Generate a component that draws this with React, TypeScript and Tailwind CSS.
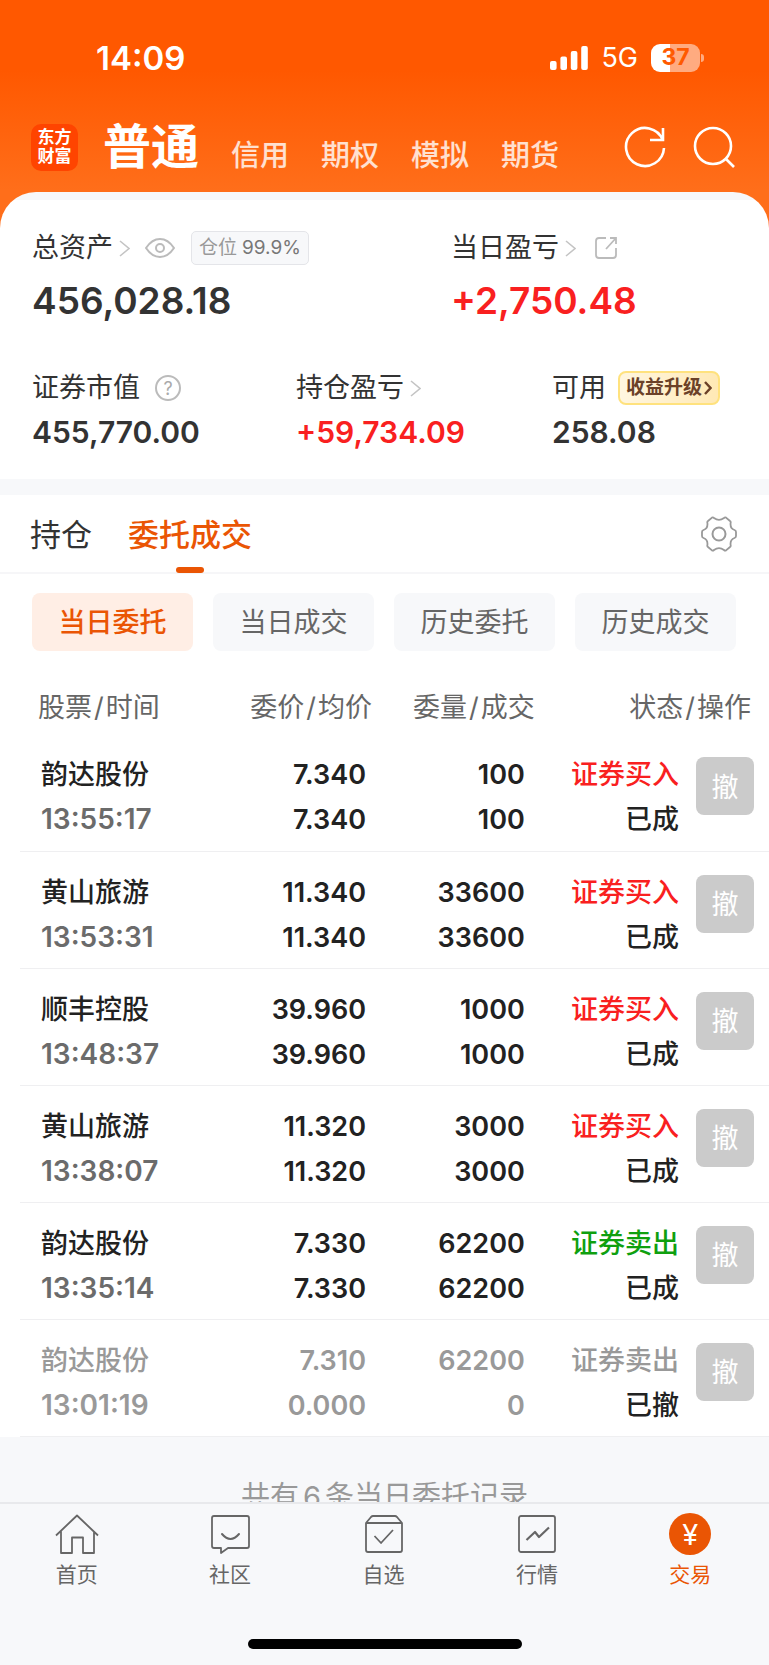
import type { ReactNode } from 'react';
import clsx from 'clsx';

type Order = {
  name: string;
  time: string;
  price: string;
  average: string;
  amount: string;
  filled: string;
  side: string;
  status: string;
};

const orders: Order[] = [
  { name: '韵达股份', time: '13:55:17', price: '7.340', average: '7.340', amount: '100', filled: '100', side: '证券买入', status: '已成' },
  { name: '黄山旅游', time: '13:53:31', price: '11.340', average: '11.340', amount: '33600', filled: '33600', side: '证券买入', status: '已成' },
  { name: '顺丰控股', time: '13:48:37', price: '39.960', average: '39.960', amount: '1000', filled: '1000', side: '证券买入', status: '已成' },
  { name: '黄山旅游', time: '13:38:07', price: '11.320', average: '11.320', amount: '3000', filled: '3000', side: '证券买入', status: '已成' },
  { name: '韵达股份', time: '13:35:14', price: '7.330', average: '7.330', amount: '62200', filled: '62200', side: '证券卖出', status: '已成' },
  { name: '韵达股份', time: '13:01:19', price: '7.310', average: '0.000', amount: '62200', filled: '0', side: '证券卖出', status: '已撤' },
];

const markets = ['信用', '期权', '模拟', '期货'];
const filters = ['当日委托', '当日成交', '历史委托', '历史成交'];

const Chevron = () => (
  <svg width="11" height="17" viewBox="0 0 11 17" fill="none" stroke="#c4c4c4" strokeWidth="1.6">
    <path d="M1 1L10 8.5L1 16" />
  </svg>
);

const StatusBar = () => (
  <div className="flex h-[76px] items-center justify-between pt-[39px] pr-[65px] pl-24 text-white">
    <span className="text-[33px] leading-9 font-semibold">14:09</span>
    <div className="flex items-center gap-[13px]">
      <svg width="38" height="24" viewBox="0 0 38 24" fill="#fff">
        <rect x="0" y="15" width="6.6" height="9" rx="2" />
        <rect x="10.4" y="10.5" width="6.6" height="13.5" rx="2" />
        <rect x="20.8" y="5" width="6.6" height="19" rx="2" />
        <rect x="31.2" y="0" width="6.6" height="24" rx="2" />
      </svg>
      <span className="text-[27px] leading-9">5G</span>
      <div className="flex items-center gap-px">
        <span className="flex h-7 w-[49px] items-center justify-center rounded-[9px] bg-[linear-gradient(to_right,#fff_38%,#ffab80_38%)] text-[23px] font-bold text-[#ff5a00]">
          37
        </span>
        <span className="h-2 w-[3px] rounded-r-full bg-[#ffab80]" />
      </div>
    </div>
  </div>
);

const Header = () => (
  <header className="shrink-0 bg-[linear-gradient(to_bottom,#ff5800_70px,#ff6e1a_190px)]">
    <StatusBar />
    <div className="flex h-[116px] items-center pt-[26px] pr-[34px] pl-[31px]">
      <span className="grid h-[47px] w-[47px] shrink-0 place-content-center rounded-[10px] bg-[#ff4400] text-center text-[17px] leading-[19px] font-bold text-white">
        东方
        <br />
        财富
      </span>
      <nav className="ml-[25px] flex flex-1 items-end gap-8 text-[29px] leading-[34px] text-white/80">
        <a className="text-[48px] leading-[52px] font-bold text-white" href="#normal">
          普通
        </a>
        {markets.map((market) => (
          <a key={market} className="font-medium" href={`#${market}`}>
            {market}
          </a>
        ))}
      </nav>
      <div className="flex gap-[27px]">
        <button aria-label="刷新">
          <svg width="42" height="42" viewBox="0 0 42 42" fill="none" stroke="#fff" strokeWidth="2.6">
            <path d="M40 22A19 19 0 1 1 38.7 14M39 2V14H26" />
          </svg>
        </button>
        <button aria-label="搜索">
          <svg width="42" height="42" viewBox="0 0 42 42" fill="none" stroke="#fff" strokeWidth="2.6">
            <circle cx="20" cy="20" r="18" />
            <path d="M32.5 32.5L41 41" />
          </svg>
        </button>
      </div>
    </div>
  </header>
);

const Summary = () => (
  <section className="px-8 pt-[31px] pb-[29px] text-[#333]">
    <div className="grid grid-cols-[419fr_286fr]">
      <div>
        <div className="flex h-[34px] items-center text-[27px]">
          总资产
          <button className="ml-[6px]" aria-label="总资产详情">
            <Chevron />
          </button>
          <button className="ml-[15px]" aria-label="隐藏金额">
            <svg width="30" height="20" viewBox="0 0 30 20" fill="none" stroke="#bbb" strokeWidth="2">
              <path d="M1 10C5 4 10 1 15 1S25 4 29 10C25 16 20 19 15 19S5 16 1 10Z" />
              <circle cx="15" cy="10" r="4" />
            </svg>
          </button>
          <span className="ml-4 flex h-[34px] items-center gap-[5px] rounded-[5px] border border-[#e4e5e9] bg-[#f7f8fa] px-[7px] text-[19px] text-[#999]">
            仓位 <span className="text-[#777]">99.9%</span>
          </span>
        </div>
        <p className="mt-4 text-[37px] leading-10 font-semibold">456,028.18</p>
      </div>
      <div>
        <div className="flex h-[34px] items-center text-[27px]">
          当日盈亏
          <button className="ml-[6px]" aria-label="当日盈亏详情">
            <Chevron />
          </button>
          <button className="ml-[19px]" aria-label="分享">
            <svg width="22" height="22" viewBox="0 0 22 22" fill="none" stroke="#bbb" strokeWidth="1.8">
              <path d="M11 1H4Q1 1 1 4V18Q1 21 4 21H18Q21 21 21 18V11M15 1H21V7M21 1L11 12" />
            </svg>
          </button>
        </div>
        <p className="mt-4 text-[37px] leading-10 font-semibold text-[#f92020]">+2,750.48</p>
      </div>
    </div>

    <div className="mt-[50px] grid grid-cols-[264fr_256fr_185fr]">
      <div>
        <div className="flex h-[34px] items-center text-[27px]">
          证券市值
          <button
            className="ml-[15px] flex h-[26px] w-[26px] items-center justify-center rounded-full border-2 border-[#bbb] text-[18px] text-[#aaa]"
            aria-label="证券市值说明"
          >
            ?
          </button>
        </div>
        <p className="mt-[9px] text-[30px] leading-9 font-semibold">455,770.00</p>
      </div>
      <div>
        <div className="flex h-[34px] items-center text-[27px]">
          持仓盈亏
          <button className="ml-[6px]" aria-label="持仓盈亏详情">
            <Chevron />
          </button>
        </div>
        <p className="mt-[9px] text-[30px] leading-9 font-semibold text-[#f92020]">+59,734.09</p>
      </div>
      <div>
        <div className="flex h-[34px] items-center text-[27px] whitespace-nowrap">
          可用
          <button className="ml-3 flex h-[34px] items-center gap-[2px] rounded-[8px] border-2 border-[#ffe27e] bg-linear-to-r from-[#fff6e0] to-[#ffe9b5] px-[6px] text-[19px] font-bold text-[#6b4128]">
            收益升级
            <svg width="8" height="14" viewBox="0 0 8 14" fill="none" stroke="currentColor" strokeWidth="2.4">
              <path d="M1 1L6.5 7L1 13" />
            </svg>
          </button>
        </div>
        <p className="mt-[9px] text-[30px] leading-9 font-semibold">258.08</p>
      </div>
    </div>
  </section>
);

const Tabs = () => (
  <div className="flex h-[79px] items-stretch border-b-2 border-[#f6f6f8] pr-8 pl-[30px] text-[31px] text-[#333]">
    <button className="pt-[3px]">持仓</button>
    <button className="relative ml-9 pt-[3px] font-medium text-[#ea5504]">
      委托成交
      <span className="absolute -bottom-[1px] left-1/2 h-[6px] w-7 -translate-x-1/2 rounded-[3px] bg-[#ea5504]" />
    </button>
    <button className="ml-auto" aria-label="设置">
      <svg width="36" height="36" viewBox="0 0 36 36" fill="none" stroke="#999" strokeWidth="1.8" strokeLinejoin="round">
        <path d="M7 5L11 1.6Q12 1 13 2Q18 5.8 23 2Q24 1 25 1.6L29 5Q30 5.5 29.6 7Q29 12.5 33.5 14Q35 14.5 35 16V20Q35 21.5 33.5 22Q29 23.5 29.6 29Q30 30.5 29 31L25 34.4Q24 35 23 34Q18 30.2 13 34Q12 35 11 34.4L7 31Q6 30.5 6.4 29Q7 23.5 2.5 22Q1 21.5 1 20V16Q1 14.5 2.5 14Q7 12.5 6.4 7Q6 5.5 7 5Z" />
        <circle cx="18" cy="18" r="6.5" strokeWidth="2" />
      </svg>
    </button>
  </div>
);

const Pair = ({ first, second }: { first: string; second: string }) => (
  <>
    {first}
    <span className="px-[2px]">/</span>
    {second}
  </>
);

const OrderRow = ({ order }: { order: Order }) => {
  const cancelled = order.status === '已撤';
  const buy = order.side === '证券买入';

  return (
    <tr className={clsx('h-[117px] border-b border-[#efeff1] align-top', cancelled ? 'text-[#999]' : 'text-[#222]')}>
      <td className="pt-[18px] pl-[21px]">
        <div>{order.name}</div>
        <div className={clsx('text-[28px] leading-[45px] font-semibold', cancelled ? 'text-[#999]' : 'text-[#6b6b6b]')}>
          {order.time}
        </div>
      </td>
      <td className="pt-[18px] pr-[6px] text-right font-semibold">
        <div>{order.price}</div>
        <div>{order.average}</div>
      </td>
      <td className="pt-[18px] pr-3 text-right font-semibold">
        <div>{order.amount}</div>
        <div>{order.filled}</div>
      </td>
      <td className="pt-[18px] pr-px text-right">
        <div className={clsx(!cancelled && (buy ? 'text-[#f92020]' : 'text-[#0fa00f]'))}>{order.side}</div>
        <div className="text-[#222]">{order.status}</div>
      </td>
      <td className="pt-[23px] pr-[15px] text-right">
        <button className="h-[58px] w-[58px] rounded-[8px] bg-[#cbcbcb] pt-[2px] text-center font-normal text-white">撤</button>
      </td>
    </tr>
  );
};

const Orders = () => (
  <table className="mt-[29px] ml-5 w-[calc(100%-20px)] table-fixed text-[27px] leading-[45px] font-medium">
    <colgroup>
      <col className="w-[25%]" />
      <col className="w-[22%]" />
      <col className="w-[22%]" />
      <col />
      <col className="w-[89px]" />
    </colgroup>
    <thead>
      <tr className="h-[54px] whitespace-nowrap text-[#666] [&>th]:font-normal">
        <th className="pl-[18px] text-left">
          <Pair first="股票" second="时间" />
        </th>
        <th className="text-right">
          <Pair first="委价" second="均价" />
        </th>
        <th className="pr-[2px] text-right">
          <Pair first="委量" second="成交" />
        </th>
        <th className="pr-[18px] text-right" colSpan={2}>
          <Pair first="状态" second="操作" />
        </th>
      </tr>
    </thead>
    <tbody>
      {orders.map((order) => (
        <OrderRow key={order.time} order={order} />
      ))}
    </tbody>
  </table>
);

const NavItem = ({ label, active, children }: { label: string; active?: boolean; children: ReactNode }) => (
  <a className={clsx('flex flex-1 flex-col items-center gap-[6px]', active ? 'text-[#ea5504]' : 'text-[#666]')} href={`#${label}`}>
    <span className="flex h-[42px] items-center">{children}</span>
    <span className="text-[21px] leading-7">{label}</span>
  </a>
);

const BottomNav = () => (
  <footer className="shrink-0 border-t-2 border-[#e8e9ec] bg-[#f7f8fa] pt-[9px]">
    <nav className="flex pr-[2px]">
      <NavItem label="首页">
        <svg width="44" height="40" viewBox="0 0 44 40" fill="none" stroke="currentColor" strokeWidth="1.8" strokeLinejoin="round">
          <path d="M1 21.5L22 1.5L43 21.5M6 17.5V39H17V23.5H28V39H39V17.5" />
        </svg>
      </NavItem>
      <NavItem label="社区">
        <svg width="39" height="40" viewBox="0 0 39 40" fill="none" stroke="currentColor" strokeWidth="1.8" strokeLinejoin="round">
          <path d="M3 2H36Q38 2 38 4V32Q38 34 36 34H17L10 39V34H3Q1 34 1 32V4Q1 2 3 2Z" />
          <path d="M11 20Q19.5 30 28 20" strokeWidth="2" strokeLinecap="round" />
        </svg>
      </NavItem>
      <NavItem label="自选">
        <svg width="38" height="38" viewBox="0 0 38 38" fill="none" stroke="currentColor" strokeWidth="1.8" strokeLinejoin="round">
          <path d="M1 8L6 2Q7 1 8 1H30Q31 1 32 2L37 8V35Q37 37 35 37H3Q1 37 1 35ZM1 8H37M9.5 21L16 28L28 15" />
        </svg>
      </NavItem>
      <NavItem label="行情">
        <svg width="38" height="38" viewBox="0 0 38 38" fill="none" stroke="currentColor" strokeWidth="1.8" strokeLinejoin="round">
          <rect x="1" y="1" width="36" height="36" rx="2" />
          <path d="M8.5 25L17 17L21 22L31 12.5" strokeWidth="2.2" />
        </svg>
      </NavItem>
      <NavItem label="交易" active>
        <span className="flex h-[42px] w-[42px] items-center justify-center rounded-full bg-[#ea5504] text-[29px] leading-none text-white">
          ¥
        </span>
      </NavItem>
    </nav>
    <div className="flex justify-center pt-[50px] pb-4">
      <span className="h-[10px] w-[274px] rounded-full bg-black" />
    </div>
  </footer>
);

export default function App() {
  return (
    <div className="flex h-screen flex-col bg-[#ff6e1a] font-['Inter','Noto_Sans_CJK_SC',sans-serif]">
      <Header />
      <main className="min-h-0 flex-1 overflow-y-auto rounded-t-[36px] bg-[#f7f8fa] pt-2 [scrollbar-width:none]">
        <div className="bg-white">
          <Summary />
          <div className="h-4 bg-[#f7f8fa]" />
          <Tabs />
          <div className="grid grid-cols-4 gap-5 pt-[19px] pr-[33px] pl-8 text-[27px]">
            {filters.map((filter, index) => (
              <button
                key={filter}
                className={clsx(
                  'h-[58px] rounded-[8px] pt-[2px]',
                  index === 0 ? 'bg-[#ffeee5] font-medium text-[#ea5504]' : 'bg-[#f7f8fa] text-[#666]',
                )}
              >
                {filter}
              </button>
            ))}
          </div>
          <Orders />
        </div>
        <p className="pt-10 pb-10 text-center text-[29px] leading-10 text-[#999]">
          共有<span className="px-1">6</span>条当日委托记录
        </p>
      </main>
      <BottomNav />
    </div>
  );
}
